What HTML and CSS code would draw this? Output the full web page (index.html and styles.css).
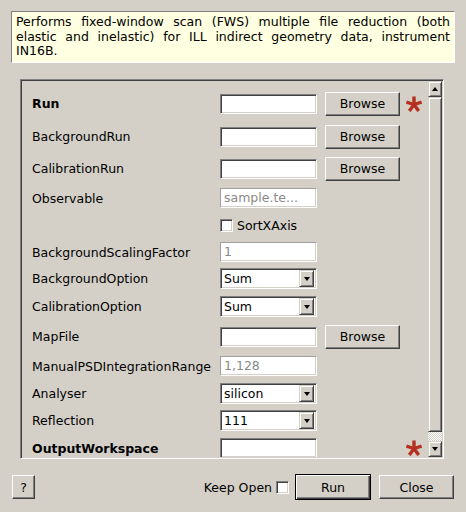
FILE: index.html
```html
<!DOCTYPE html>
<html>
<head>
<meta charset="utf-8">
<link rel="stylesheet" href="styles.css">
</head>
<body>
<div class="dialog">
  <div class="desc">
    <span class="line">Performs fixed-window scan (FWS) multiple file reduction (both</span>
    <span class="line">elastic and inelastic) for ILL indirect geometry data, instrument</span>
    <span class="line last">IN16B.</span>
  </div>

  <div class="frame">
    <div class="content">
      <div class="row h33"><span class="lbl bold">Run</span><div class="field"><div class="txt"></div><div class="btn browse">Browse</div><svg class="req" viewBox="0 0 16 16"><g stroke="#b5301f" stroke-width="3.4" stroke-linecap="butt"><line x1="8" y1="8.5" x2="8" y2="0.5"/><line x1="8" y1="8.5" x2="15.6" y2="6"/><line x1="8" y1="8.5" x2="12.7" y2="15"/><line x1="8" y1="8.5" x2="3.3" y2="15"/><line x1="8" y1="8.5" x2="0.4" y2="6"/></g></svg></div></div>
      <div class="row h33"><span class="lbl">BackgroundRun</span><div class="field"><div class="txt"></div><div class="btn browse">Browse</div></div></div>
      <div class="row h31"><span class="lbl">CalibrationRun</span><div class="field"><div class="txt"></div><div class="btn browse">Browse</div></div></div>
      <div class="row h28"><span class="lbl">Observable</span><div class="field"><div class="txt dis">sample.te...</div></div></div>
      <div class="row h27"><span class="lbl"></span><div class="field"><span class="chk"></span><span class="chklbl">SortXAxis</span></div></div>
      <div class="row h26"><span class="lbl">BackgroundScalingFactor</span><div class="field"><div class="txt dis">1</div></div></div>
      <div class="row h27"><span class="lbl">BackgroundOption</span><div class="field"><div class="combo"><span class="cval">Sum</span><span class="cbtn"><span class="down"></span></span></div></div></div>
      <div class="row h29"><span class="lbl">CalibrationOption</span><div class="field"><div class="combo"><span class="cval">Sum</span><span class="cbtn"><span class="down"></span></span></div></div></div>
      <div class="row h31"><span class="lbl">MapFile</span><div class="field"><div class="txt"></div><div class="btn browse">Browse</div></div></div>
      <div class="row h28"><span class="lbl">ManualPSDIntegrationRange</span><div class="field"><div class="txt dis">1,128</div></div></div>
      <div class="row h27"><span class="lbl">Analyser</span><div class="field"><div class="combo"><span class="cval">silicon</span><span class="cbtn"><span class="down"></span></span></div></div></div>
      <div class="row h27"><span class="lbl">Reflection</span><div class="field"><div class="combo"><span class="cval">111</span><span class="cbtn"><span class="down"></span></span></div></div></div>
      <div class="row h28"><span class="lbl bold">OutputWorkspace</span><div class="field"><div class="txt"></div><div class="spacer"></div><svg class="req" viewBox="0 0 16 16"><g stroke="#b5301f" stroke-width="3.4" stroke-linecap="butt"><line x1="8" y1="8.5" x2="8" y2="0.5"/><line x1="8" y1="8.5" x2="15.6" y2="6"/><line x1="8" y1="8.5" x2="12.7" y2="15"/><line x1="8" y1="8.5" x2="3.3" y2="15"/><line x1="8" y1="8.5" x2="0.4" y2="6"/></g></svg></div></div>
    </div>
    <div class="vscroll">
      <div class="sbtn"><span class="up"></span></div>
      <div class="thumb"></div>
      <div class="trough"></div>
      <div class="sbtn"><span class="down"></span></div>
    </div>
  </div>

  <div class="bottom">
    <div class="btn help">?</div>
    <div class="grow"></div>
    <span class="keep">Keep Open</span>
    <span class="chk keepchk"></span>
    <div class="btn run">Run</div>
    <div class="btn close">Close</div>
  </div>
</div>
</body>
</html>
```

FILE: styles.css
```css
* { box-sizing: border-box; }
html, body { margin: 0; padding: 0; }
body {
  width: 466px;
  height: 512px;
  background: #d4d0c8;
  font-family: "DejaVu Sans", sans-serif;
  font-size: 12.5px;
  color: #000;
  overflow: hidden;
}
.dialog { padding-top: 11px; }

.desc {
  margin-left: 11px;
  width: 444px;
  height: 52px;
  background: #ffffe1;
  border-top: 1px solid #808080;
  border-left: 1px solid #808080;
  border-bottom: 1px solid #ffffff;
  border-right: 1px solid #ffffff;
  padding: 3px 4px 0 4px;
  line-height: 14.5px;
}
.desc .line {
  display: block;
  text-align: justify;
  text-align-last: justify;
  white-space: nowrap;
}
.desc .line.last { text-align-last: left; }

.frame {
  margin-top: 16px;
  margin-left: 20px;
  width: 424px;
  height: 380px;
  border-top: 1px solid #808080;
  border-left: 1px solid #808080;
  border-bottom: 1px solid #ffffff;
  border-right: 1px solid #ffffff;
  box-shadow: inset 1px 1px 0 #404040, inset -1px -1px 0 #d4d0c8;
  padding: 1px;
  display: flex;
}
.content {
  flex: 1;
  overflow: hidden;
  padding: 6px 0 0 10px;
}
.row {
  display: grid;
  grid-template-columns: 188px auto;
  align-items: center;
}
.h26 { height: 26px; }
.h27 { height: 27px; }
.h28 { height: 28px; }
.h29 { height: 29px; }
.h31 { height: 31px; }
.h33 { height: 33px; }
.lbl { white-space: nowrap; }
.bold { font-weight: bold; }
.field { display: flex; align-items: center; }

.txt {
  width: 97px;
  height: 20px;
  background: #fff;
  border-top: 1px solid #808080;
  border-left: 1px solid #808080;
  border-bottom: 1px solid #ffffff;
  border-right: 1px solid #ffffff;
  box-shadow: inset 1px 1px 0 #404040, inset -1px -1px 0 #d4d0c8;
  padding: 0 0 0 3px;
  line-height: 18px;
  white-space: nowrap;
  overflow: hidden;
}
.txt.dis {
  color: #8a8a8a;
  box-shadow: inset -1px -1px 0 #d4d0c8;
  border-top-color: #a0a0a0;
  border-left-color: #a0a0a0;
}

.btn {
  background: #d4d0c8;
  border-top: 1px solid #ffffff;
  border-left: 1px solid #ffffff;
  border-bottom: 1px solid #404040;
  border-right: 1px solid #404040;
  box-shadow: inset -1px -1px 0 #808080;
  display: flex;
  align-items: center;
  justify-content: center;
  white-space: nowrap;
}
.browse { width: 75px; height: 24px; margin-left: 8px; }
.spacer { width: 83px; }
.req { width: 16px; height: 16px; margin-left: 6px; }

.chk {
  display: inline-block;
  width: 13px;
  height: 13px;
  background: #fff;
  border-top: 1px solid #808080;
  border-left: 1px solid #808080;
  border-bottom: 1px solid #ffffff;
  border-right: 1px solid #ffffff;
  box-shadow: inset 1px 1px 0 #404040, inset -1px -1px 0 #d4d0c8;
}
.chklbl { margin-left: 4px; }

.combo {
  width: 97px;
  height: 21px;
  background: #fff;
  border-top: 1px solid #808080;
  border-left: 1px solid #808080;
  border-bottom: 1px solid #ffffff;
  border-right: 1px solid #ffffff;
  box-shadow: inset 1px 1px 0 #404040, inset -1px -1px 0 #d4d0c8;
  padding: 2px 2px 2px 3px;
  display: flex;
  align-items: center;
}
.cval { flex: 1; line-height: 16px; }
.cbtn {
  width: 15px;
  height: 17px;
  background: #d4d0c8;
  border-top: 1px solid #d4d0c8;
  border-left: 1px solid #d4d0c8;
  border-bottom: 1px solid #404040;
  border-right: 1px solid #404040;
  box-shadow: inset 1px 1px 0 #ffffff, inset -1px -1px 0 #808080;
  display: flex;
  align-items: center;
  justify-content: center;
}
.down {
  width: 0; height: 0;
  border-left: 3.5px solid transparent;
  border-right: 3.5px solid transparent;
  border-top: 4px solid #000;
}
.up {
  width: 0; height: 0;
  border-left: 3.5px solid transparent;
  border-right: 3.5px solid transparent;
  border-bottom: 4px solid #000;
}

.vscroll {
  width: 14px;
  display: flex;
  flex-direction: column;
}
.sbtn {
  height: 16px;
  background: #d4d0c8;
  border-top: 1px solid #d4d0c8;
  border-left: 1px solid #d4d0c8;
  border-bottom: 1px solid #404040;
  border-right: 1px solid #404040;
  box-shadow: inset 1px 1px 0 #ffffff, inset -1px -1px 0 #808080;
  display: flex;
  align-items: center;
  justify-content: center;
}
.thumb {
  height: 335px;
  background: #d4d0c8;
  border-top: 1px solid #d4d0c8;
  border-left: 1px solid #d4d0c8;
  border-bottom: 1px solid #404040;
  border-right: 1px solid #404040;
  box-shadow: inset 1px 1px 0 #ffffff, inset -1px -1px 0 #808080;
}
.trough {
  flex: 1;
  background: repeating-conic-gradient(#ffffff 0 25%, #d4d0c8 0 50%) 0 0 / 2px 2px;
}

.bottom {
  display: flex;
  align-items: center;
  margin-top: 15px;
  padding: 0 12px;
  height: 26px;
}
.help { width: 23px; height: 24px; }
.grow { flex: 1; }
.keep { margin-right: 4px; }
.keepchk { margin-right: 6px; }
.run {
  width: 76px;
  height: 26px;
  border: 1px solid #000;
  box-shadow: inset 1px 1px 0 #ffffff, inset -1px -1px 0 #404040, inset -2px -2px 0 #808080;
}
.close { width: 75px; height: 24px; margin-left: 8px; }
```
